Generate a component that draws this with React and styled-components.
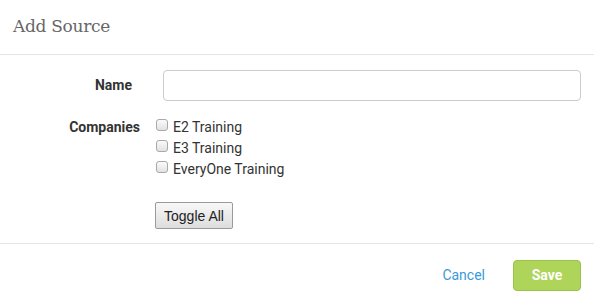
import React from "react";
import styled, { createGlobalStyle } from "styled-components";

const GlobalStyle = createGlobalStyle`
  html, body {
    margin: 0;
    padding: 0;
    background: #fff;
  }
  body {
    font-family: Roboto, "Liberation Sans", Arial, sans-serif;
    font-size: 14px;
    color: #333;
  }
`;

const Modal = styled.div`
  width: 594px;
  height: 302px;
  background: #fff;
  display: flex;
  flex-direction: column;
`;

const Header = styled.div`
  height: 55px;
  padding: 0 13px 2px;
  display: flex;
  align-items: center;
  border-bottom: 1px solid #e5e5e5;
  box-sizing: border-box;
`;

const Title = styled.h4`
  margin: 0;
  font-family: "DejaVu Serif", "Liberation Serif", serif;
  font-weight: 300;
  font-size: 17px;
  color: #666;
  letter-spacing: -0.3px;
`;

const Body = styled.div`
  padding: 15px 13px 14px 0;
  border-bottom: 1px solid #e5e5e5;
  display: grid;
  grid-template-columns: 140px 1fr;
  column-gap: 15px;
  row-gap: 16px;
  align-items: start;
`;

const Label = styled.label`
  text-align: right;
  font-weight: 700;
  color: #333;
  line-height: ${(p) => p.$lh || "31px"};
  padding-right: ${(p) => p.$pr || "0"};
`;

const TextInput = styled.input`
  margin-left: 8px;
  height: 31px;
  box-sizing: border-box;
  border: 1px solid #ccc;
  border-radius: 4px;
  padding: 6px 10px;
  font-family: inherit;
  font-size: 14px;
  outline: none;
`;

const CheckList = styled.div`
  display: flex;
  flex-direction: column;
`;

const CheckRow = styled.label`
  display: flex;
  align-items: flex-start;
  height: 21px;
  line-height: 21px;
  color: #333;
`;

const CheckBox = styled.input.attrs({ type: "checkbox" })`
  appearance: none;
  -webkit-appearance: none;
  margin: 2px 5px 0 1px;
  width: 12px;
  height: 12px;
  box-sizing: border-box;
  border: 1px solid #a9a9a9;
  border-radius: 3px;
  background: linear-gradient(#fafafa, #e2e2e2);
`;

const ToggleButton = styled.button`
  align-self: flex-start;
  margin-top: 22px;
  height: 27px;
  width: 78px;
  padding: 0;
  font-family: "Liberation Sans", Arial, sans-serif;
  font-size: 14px;
  color: #222;
  background: linear-gradient(#f8f8f8, #dddddd);
  border: 1px solid #9a9a9a;
  border-radius: 2px;
`;

const Footer = styled.div`
  flex: 1;
  display: flex;
  align-items: center;
  justify-content: flex-end;
  padding: 4px 13px 0 0;
  gap: 28px;
`;

const LinkButton = styled.a`
  color: #3a99d8;
  font-size: 14px;
  text-decoration: none;
  cursor: pointer;
`;

const SaveButton = styled.button`
  width: 68px;
  height: 31px;
  background: #aed45a;
  border: 1px solid #9bc248;
  border-radius: 4px;
  color: #fff;
  font-family: inherit;
  font-weight: 700;
  font-size: 14px;
`;

const companies = ["E2 Training", "E3 Training", "EveryOne Training"];

export default function App() {
  return (
    <>
      <GlobalStyle />
      <Modal>
        <Header>
          <Title>Add Source</Title>
        </Header>
        <Body>
          <Label $pr="8px">Name</Label>
          <TextInput type="text" />
          <Label $lh="21px">Companies</Label>
          <CheckList>
            {companies.map((c) => (
              <CheckRow key={c}>
                <CheckBox />
                {c}
              </CheckRow>
            ))}
            <ToggleButton>Toggle All</ToggleButton>
          </CheckList>
        </Body>
        <Footer>
          <LinkButton>Cancel</LinkButton>
          <SaveButton>Save</SaveButton>
        </Footer>
      </Modal>
    </>
  );
}
